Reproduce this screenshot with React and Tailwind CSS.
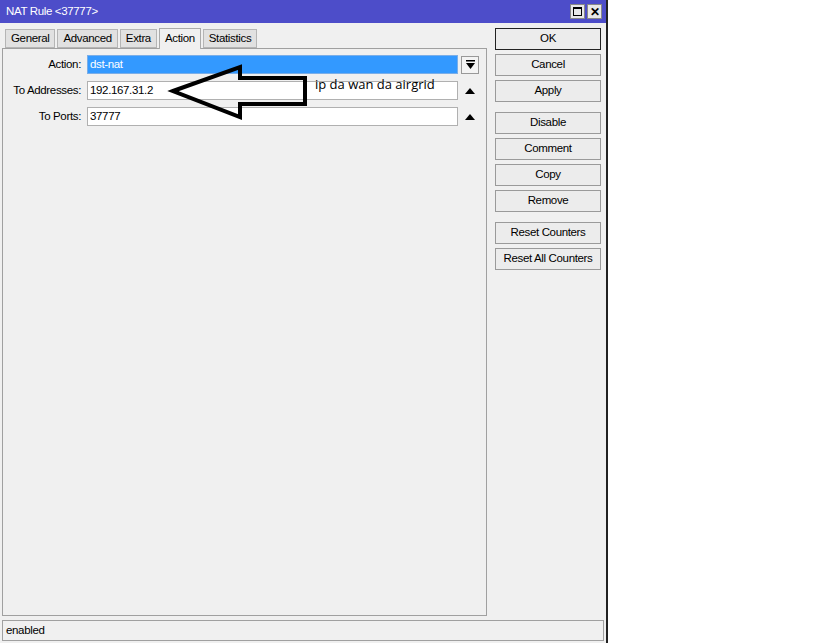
import React from 'react'

const tabs = ['General', 'Advanced', 'Extra', 'Action', 'Statistics']

const buttonGroups = [
  ['OK', 'Cancel', 'Apply'],
  ['Disable', 'Comment', 'Copy', 'Remove'],
  ['Reset Counters', 'Reset All Counters'],
]

function UpArrow() {
  return (
    <svg width="10" height="6" viewBox="0 0 10 6">
      <path d="M0 6 L5 0 L10 6 Z" fill="#000" />
    </svg>
  )
}

function Field({ label, children, className, right }) {
  return (
    <div className="flex items-center">
      <div className="w-[80px] pr-[2px] text-right">{label}:</div>
      <div className={`ml-[4px] flex h-[19px] w-[371px] items-center border px-[2px] ${className}`}>
        {children}
      </div>
      <div className="flex w-[24px] items-center justify-center">{right}</div>
    </div>
  )
}

export default function App() {
  return (
    <div
      className="relative h-[643px] w-[819px] overflow-hidden bg-white text-[11.5px] tracking-[-0.35px] text-black"
      style={{ fontFamily: '"Liberation Sans", Arial, sans-serif' }}
    >
      <div className="flex h-[643px] w-[608px] flex-col border-r-2 border-[#222] bg-[#f0f0f0]">
        {/* title bar */}
        <div className="flex h-[23px] items-center justify-between bg-[#4d4dc9] pl-[6px] pr-[4px] text-white">
          <span>NAT Rule &lt;37777&gt;</span>
          <div className="flex gap-[2px]">
            <div className="flex h-[15px] w-[15px] items-center justify-center border border-[#888] bg-[#e8e8e8]">
              <div className="h-[9px] w-[9px] border border-black border-t-2" />
            </div>
            <div className="flex h-[15px] w-[15px] items-center justify-center border border-[#888] bg-[#e8e8e8] text-[12px] font-bold leading-none text-black">
              ✕
            </div>
          </div>
        </div>

        <div className="flex flex-1">
          {/* left side */}
          <div className="flex w-[487px] flex-col pl-[2px] pt-[5px]">
            <div className="flex items-end gap-[2px] pl-[3px]">
              {tabs.map((t) =>
                t === 'Action' ? (
                  <div
                    key={t}
                    className="relative -mb-px flex h-[21px] items-center border border-b-0 border-[#aaa] bg-[#f0f0f0] px-[5px]"
                  >
                    {t}
                  </div>
                ) : (
                  <div
                    key={t}
                    className="flex h-[19px] items-center border border-[#b5b5b5] bg-[#e1e1e1] px-[5px]"
                  >
                    {t}
                  </div>
                ),
              )}
            </div>
            <div className="flex flex-1 flex-col gap-[7px] border border-[#a0a0a0] pt-[6px]">
              <Field
                label="Action"
                className="border-[#7aaee8] bg-[#3399ff] text-white"
                right={
                  <div className="flex h-[18px] w-[18px] items-center justify-center border border-[#999] bg-[#f4f4f4]">
                    <svg width="9" height="10" viewBox="0 0 9 10">
                      <rect x="0" y="0" width="9" height="1.5" fill="#000" />
                      <path d="M0 3 L9 3 L4.5 9 Z" fill="#000" />
                    </svg>
                  </div>
                }
              >
                dst-nat
              </Field>
              <Field label="To Addresses" className="border-[#b0b0b0] bg-white" right={<UpArrow />}>
                192.167.31.2
              </Field>
              <Field label="To Ports" className="border-[#b0b0b0] bg-white" right={<UpArrow />}>
                37777
              </Field>
            </div>
          </div>

          {/* right side buttons */}
          <div className="flex flex-1 flex-col gap-[10px] pl-[8px] pr-[5px] pt-[5px]">
            {buttonGroups.map((g, i) => (
              <div key={i} className="flex flex-col gap-[4px]">
                {g.map((b) => (
                  <div
                    key={b}
                    className={`flex h-[22px] items-center justify-center border bg-[#ececec] ${
                      b === 'OK' ? 'border-[#222]' : 'border-[#9a9a9a]'
                    }`}
                  >
                    {b}
                  </div>
                ))}
              </div>
            ))}
          </div>
        </div>

        {/* status bar */}
        <div className="mx-[2px] mb-[2px] mt-[4px] flex h-[21px] items-center border border-[#a0a0a0] px-[3px]">
          enabled
        </div>
      </div>

      {/* annotation */}
      <svg className="absolute left-0 top-0" width="819" height="643" viewBox="0 0 819 643">
        <path
          d="M173 91 L240 67 L240 78 L305 78 L305 104 L240 104 L240 117 Z"
          fill="none"
          stroke="#000"
          strokeWidth="4"
          strokeLinejoin="miter"
        />
      </svg>
      <div
        className="absolute left-[315px] top-[75px] text-[13px] tracking-normal"
        style={{ fontFamily: '"Open Sans", sans-serif' }}
      >
        ip da wan da airgrid
      </div>
    </div>
  )
}
